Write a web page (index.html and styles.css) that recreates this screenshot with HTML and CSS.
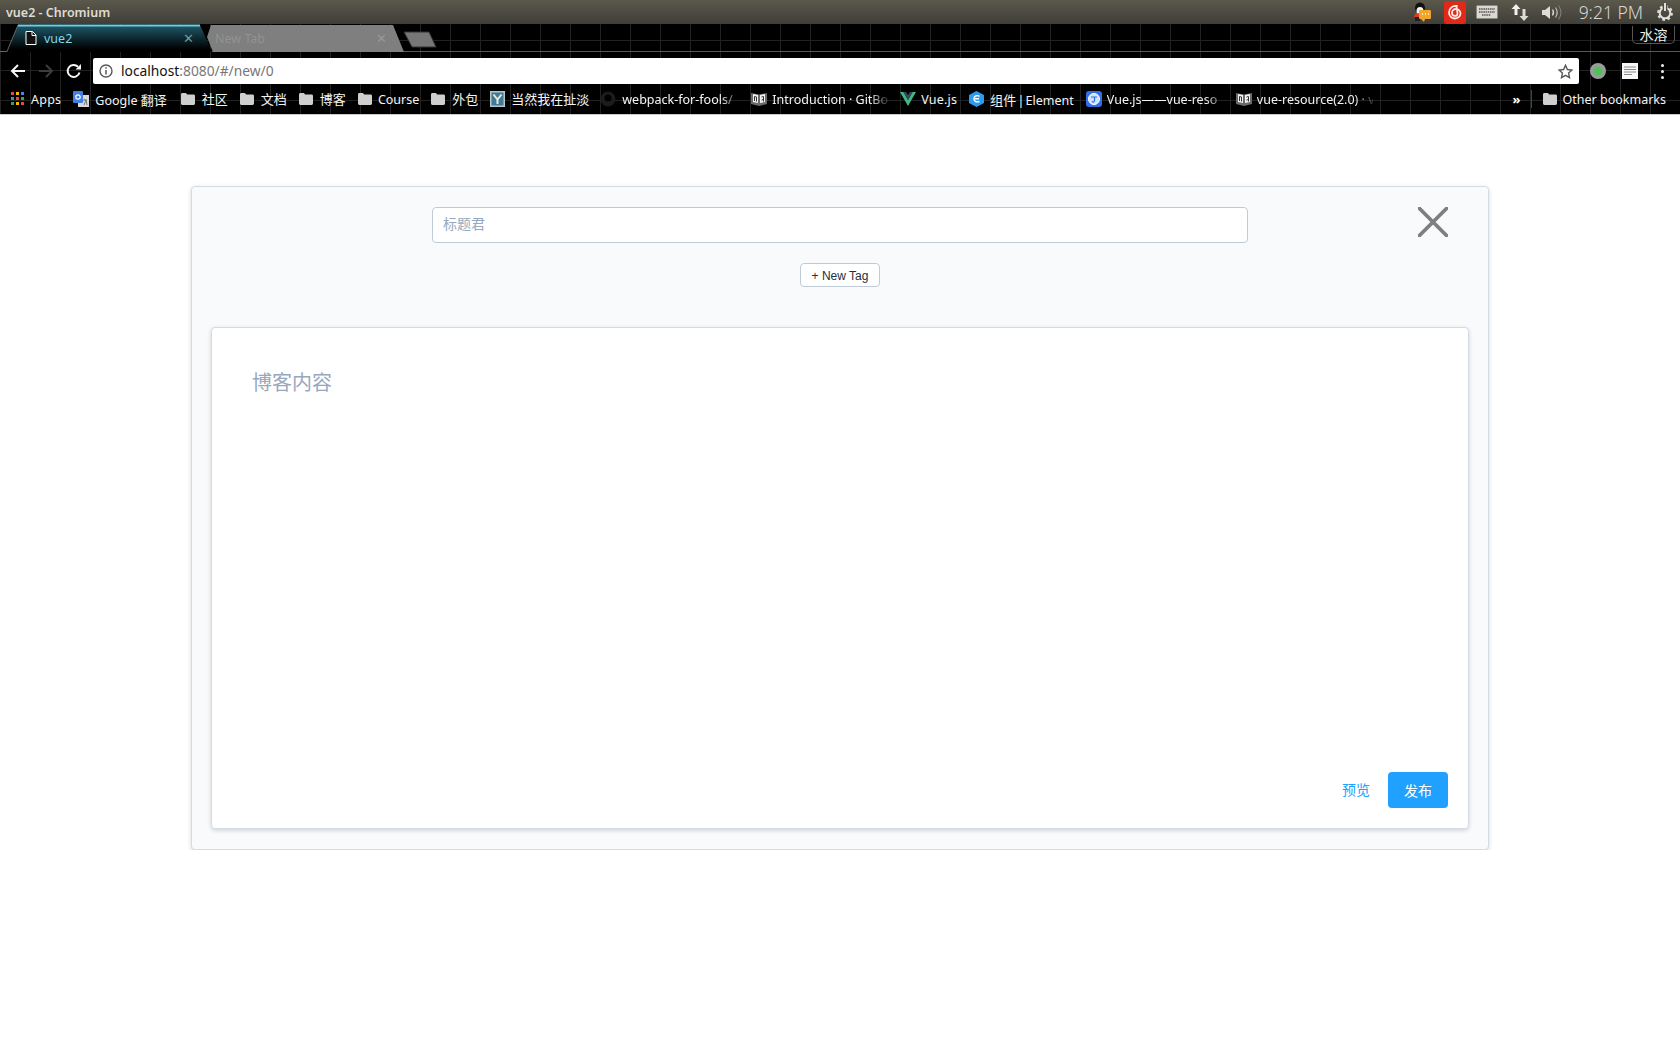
FILE: index.html
```html
<!DOCTYPE html>
<html>
<head>
	<meta charset="utf-8">
	<title>vue2 - Chromium</title>
	<link rel="stylesheet" href="styles.css">
</head>
<body>
	<svg class="defs" width="0" height="0">
		<symbol id="folder" viewBox="0 0 14 12">
			<path d="M0 1.500C0 .7.6 0 1.400 0h3.400l1.400 1.600h6.400c.8 0 1.400.6 1.400 1.400v7.600c0 .8-.6 1.400-1.400 1.400H1.400C.6 12 0 11.400 0 10.600z" fill="#cfcfcf"/>
		</symbol>
		<symbol id="book" viewBox="0 0 16 14">
			<path d="M0 1l8 1.500L16 1v11l-8 2-8-2z" fill="#6b6b6b"/>
			<path d="M2 2l5 1v8l-5-1zM9 3l5-1v8l-5 1z" fill="#f2f2f2"/>
			<path d="M3.500 9V4.500L5.500 5v4.500M10.500 5l2-.5v3l-2 .5M12.500 7v2.500" fill="none" stroke="#333" stroke-width="1"/>
		</symbol>
	</svg>

	<!-- ubuntu title bar -->
	<div class="titlebar">
		<span class="window-title">vue2 - Chromium</span>
		<div class="indicators">
			<svg class="ind-qq" width="18" height="20" viewBox="0 0 18 20">
				<ellipse cx="7" cy="6" rx="5" ry="5.500" fill="#111"/>
				<ellipse cx="7" cy="9" rx="3.500" ry="4" fill="#f4f4f4"/>
				<path d="M2 12c1-1 8-1 10 0l1 3H1z" fill="#e03a1c"/>
				<path d="M2 15h5v4H2z" fill="#222"/>
				<rect x="6" y="8" width="12" height="9" rx="1" fill="#f1a52b"/>
				<path d="M8 17l3 3 1-3z" fill="#f1a52b"/>
				<path d="M9 12h1M12 12h1M15 12h1" stroke="#fff" stroke-width="1.500"/>
			</svg>
			<svg class="ind-music" width="22" height="23" viewBox="0 0 22 23">
				<rect width="22" height="23" rx="3" fill="#e1291a"/>
				<path d="M13 5c-5-.5-8 2.500-8 6.500 0 3.500 2.800 6 6 6s5.500-2.500 5.500-5-2-4.500-4.500-4.500-4 1.800-4 3.700 1.300 3.200 3 3.200 2.500-1.200 2.500-2.500L12.500 6" fill="none" stroke="#fbe9e6" stroke-width="1.800" stroke-linecap="round"/>
			</svg>
			<svg class="ind-keys" width="22" height="14" viewBox="0 0 22 14">
				<rect x=".5" y=".5" width="21" height="13" rx="1" fill="#d8d8d4" stroke="#8c8b84"/>
				<path d="M3 4h16M3 7h16M6 10h9" stroke="#55544e" stroke-width="1.500" stroke-dasharray="1.500 .7"/>
			</svg>
			<svg class="ind-net" width="18" height="19" viewBox="0 0 18 19">
				<path d="M5 1L.5 6h3v6h3V6h3z" fill="#f0f0ec"/>
				<path d="M13 18l4.500-5h-3V6h-3v7h-3z" fill="#dcdcd8"/>
			</svg>
			<svg class="ind-vol" width="21" height="17" viewBox="0 0 21 17">
				<path d="M0 6h3l5-4v13l-5-4H0z" fill="#dddcd8"/>
				<path d="M10.500 5.500c1.200 1.800 1.200 4.200 0 6" fill="none" stroke="#dddcd8" stroke-width="1.300"/>
				<path d="M13.500 3.500c2 3 2 7 0 10" fill="none" stroke="#bdbcb6" stroke-width="1.200"/>
				<path d="M16.500 1.500c3 4.300 3 9.700 0 14" fill="none" stroke="#7d7c75" stroke-width="1.200"/>
			</svg>
			<span class="clock">9:21 PM</span>
			<svg class="ind-gear" width="18" height="18" viewBox="0 0 18 18">
				<circle cx="9" cy="10" r="6.600" fill="none" stroke="#dfdfdb" stroke-width="2.600" stroke-dasharray="2.600 2.580"/>
				<circle cx="9" cy="10" r="5.300" fill="none" stroke="#dfdfdb" stroke-width="2"/>
				<path d="M9 1v7" stroke="#4a4943" stroke-width="4.500"/>
				<path d="M9 0v8" stroke="#dfdfdb" stroke-width="2"/>
			</svg>
		</div>
	</div>

	<!-- browser chrome -->
	<div class="chrome">
		<div class="tabstrip">
			<div class="tab tab-active">
				<svg class="tab-shape" width="212" height="28" viewBox="0 0 212 28">
					<defs>
						<linearGradient id="tabfill" x1="0" y1="0" x2="0" y2="1">
							<stop offset="0" stop-color="#1f5a6b"/>
							<stop offset=".9" stop-color="#000"/>
						</linearGradient>
					</defs>
					<path d="M7 28L18 1h182l12 27z" fill="url(#tabfill)"/>
					<path d="M0 27.500h7L18 1" fill="none" stroke="#666"/>
					<path d="M18 1.500h182" stroke="#6fcfe0" stroke-width="2"/>
				</svg>
				<svg class="tab-doc" width="12" height="14" viewBox="0 0 12 14">
					<path d="M1 .500h6.500L11 4v9.500H1z" fill="#111" stroke="#fff"/>
					<path d="M7 .500V4.500h4" fill="none" stroke="#fff"/>
				</svg>
				<span class="tab-title">vue2</span>
				<span class="tab-close">✕</span>
			</div>
			<div class="tab tab-idle">
				<svg class="tab-shape" width="198" height="28" viewBox="0 0 198 28">
					<path d="M5 1L1 13l6 15h191L187 1z" fill="#7f7f7f"/>
				</svg>
				<span class="tab-title">New Tab</span>
				<span class="tab-close">✕</span>
			</div>
			<svg class="new-tab" width="34" height="17" viewBox="0 0 34 17">
				<path d="M1 1h25l7 15H9z" fill="#777" stroke="#333"/>
			</svg>
			<div class="profile">水溶</div>
		</div>

		<div class="toolbar">
			<svg class="nav-btn" width="16" height="16" viewBox="0 0 16 16">
				<path d="M15 8H2M8 2L2 8l6 6" fill="none" stroke="#f5f5f5" stroke-width="2"/>
			</svg>
			<svg class="nav-btn" width="16" height="16" viewBox="0 0 16 16">
				<path d="M1 8h13M8 2l6 6-6 6" fill="none" stroke="#3c3c3c" stroke-width="2"/>
			</svg>
			<svg class="nav-btn" width="16" height="16" viewBox="0 0 16 16">
				<path d="M13.500 9.500A6 6 0 1 1 12 3.800" fill="none" stroke="#f5f5f5" stroke-width="2"/>
				<path d="M9.500 6.500H15V1z" fill="#f5f5f5"/>
			</svg>
			<div class="omnibox">
				<svg class="info-icon" width="14" height="14" viewBox="0 0 14 14">
					<circle cx="7" cy="7" r="6" fill="none" stroke="#5a5a5a" stroke-width="1.400"/>
					<path d="M7 6v4.500M7 3.300v1.500" stroke="#5a5a5a" stroke-width="1.500"/>
				</svg>
				<span class="url"><span class="url-host">localhost</span>:8080/#/new/0</span>
				<svg class="star-icon" width="15" height="15" viewBox="0 0 15 15">
					<path d="M7.500 1.300l1.900 4.200 4.600.5-3.400 3.100.9 4.500-4-2.300-4 2.300.9-4.500L1 6l4.600-.5z" fill="none" stroke="#555" stroke-width="1.400"/>
				</svg>
			</div>
			<svg class="ext-dot" width="16" height="16" viewBox="0 0 16 16">
				<circle cx="8" cy="8" r="8" fill="#9b9b9b"/>
				<circle cx="8" cy="8" r="4.500" fill="#4dc15c"/>
			</svg>
			<svg class="ext-note" width="16" height="16" viewBox="0 0 16 16">
				<rect width="16" height="16" fill="#f7f7f7"/>
				<path d="M2 4h12M2 6.500h12M2 9h12M2 11.500h8" stroke="#8a8a8a"/>
			</svg>
			<div class="menu-dots"><i></i><i></i><i></i></div>
		</div>

		<div class="bookmarks">
			<a class="bm bm-folder">
				<svg width="13" height="13" viewBox="0 0 13 13">
					<path d="M0 0h3v3H0z" fill="#e8453c"/><path d="M5 0h3v3H5z" fill="#f5b400"/><path d="M10 0h3v3h-3z" fill="#3f85f4"/>
					<path d="M0 5h3v3H0z" fill="#3f85f4"/><path d="M5 5h3v3H5z" fill="#e8453c"/><path d="M10 5h3v3h-3z" fill="#2fa85a"/>
					<path d="M0 10h3v3H0z" fill="#2fa85a"/><path d="M5 10h3v3H5z" fill="#f5b400"/><path d="M10 10h3v3h-3z" fill="#e8453c"/>
				</svg>
				<span class="bm-apps">Apps</span>
			</a>
			<a class="bm bm-google">
				<svg width="16" height="16" viewBox="0 0 16 16">
					<rect x="5" y="4" width="11" height="12" fill="#d8d8d8"/>
					<rect width="10" height="12" rx="1" fill="#3f7fe8"/>
					<circle cx="5" cy="6" r="2.200" fill="none" stroke="#fff" stroke-width="1.200"/>
					<path d="M10 9h4M12 8v1M11 14l2-5 1 5" fill="none" stroke="#777"/>
				</svg>
				<span>Google <span class="cjk">翻译</span></span>
			</a>
			<a class="bm bm-folder"><svg width="14" height="12"><use href="#folder"/></svg><span class="cjk">社区</span></a>
			<a class="bm bm-folder"><svg width="14" height="12"><use href="#folder"/></svg><span class="cjk">文档</span></a>
			<a class="bm bm-folder"><svg width="14" height="12"><use href="#folder"/></svg><span class="cjk">博客</span></a>
			<a class="bm"><svg width="14" height="12"><use href="#folder"/></svg><span>Course</span></a>
			<a class="bm bm-folder"><svg width="14" height="12"><use href="#folder"/></svg><span class="cjk">外包</span></a>
			<a class="bm bm-y">
				<svg width="15" height="16" viewBox="0 0 15 16">
					<rect width="15" height="16" fill="#b9c6c4"/>
					<rect x="1.500" y="1.500" width="12" height="13" fill="#3d7a9c"/>
					<path d="M3.500 3.500l4 5 4-5M7.500 8v5" fill="none" stroke="#efe9d6" stroke-width="2"/>
				</svg>
				<span class="cjk">当然我在扯淡</span>
			</a>
			<a class="bm">
				<svg width="16" height="16" viewBox="0 0 16 16">
					<circle cx="8" cy="8" r="7.500" fill="#1c1c1c"/>
					<circle cx="8" cy="7" r="3.500" fill="#000"/>
				</svg>
				<span class="bm-cut bm-webpack">webpack-for-fools/</span>
			</a>
			<a class="bm bm-book"><svg width="16" height="14"><use href="#book"/></svg><span class="bm-cut bm-intro">Introduction · GitBo</span></a>
			<a class="bm bm-book">
				<svg width="16" height="14" viewBox="0 0 16 14">
					<path d="M0 0h3.500L8 8l4.500-8H16L8 14z" fill="#41b883"/>
					<path d="M3.500 0h2.700L8 3.200 9.800 0h2.700L8 8z" fill="#35495e"/>
				</svg>
				<span class="bm-vue">Vue.js</span>
			</a>
			<a class="bm">
				<svg width="15" height="16" viewBox="0 0 15 16">
					<path d="M7.500 0L15 4v8l-7.500 4L0 12V4z" fill="#2a9bf0"/>
					<path d="M10.500 5.500C9 4 5.500 4.500 5 7s1.500 4.500 5.500 3.500M6 7.800h4" fill="none" stroke="#fff" stroke-width="1.400"/>
				</svg>
				<span class="bm-element"><span class="cjk">组件</span> | Element</span>
			</a>
			<a class="bm bm-book">
				<svg width="16" height="16" viewBox="0 0 16 16">
					<rect width="16" height="16" rx="3" fill="#2f6fe8"/>
					<circle cx="8" cy="8" r="5.500" fill="#cfe0fb" stroke="#fff"/>
					<path d="M5 6h6M8.500 6v3.500c0 1.500-1.500 2-2.500 1" fill="none" stroke="#2f6fe8" stroke-width="1.200"/>
				</svg>
				<span class="bm-cut bm-vueres">Vue.js——vue-reso</span>
			</a>
			<a class="bm bm-book"><svg width="16" height="14"><use href="#book"/></svg><span class="bm-cut bm-res2">vue-resource(2.0) · v</span></a>
			<div class="bm-end">
				<span class="bm-more">»</span>
				<span class="bm-sep"></span>
				<a class="bm"><svg width="14" height="12"><use href="#folder"/></svg><span>Other bookmarks</span></a>
			</div>
		</div>
	</div>

	<!-- page -->
	<div class="page">
		<div class="panel">
			<div class="title-row">
				<div class="title-input">标题君</div>
				<svg class="close-icon" width="30" height="30" viewBox="0 0 30 30">
					<path d="M1.500 1.500l27 27M28.500 1.500l-27 27" stroke="#7f7f7f" stroke-width="3.800" stroke-linecap="round"/>
				</svg>
			</div>
			<div class="tag-row">
				<button class="tag-btn">+ New Tag</button>
			</div>
			<div class="editor">
				<div class="editor-text">博客内容</div>
				<div class="editor-actions">
					<button class="btn-text">预览</button>
					<button class="btn-primary">发布</button>
				</div>
			</div>
		</div>
	</div>
</body>
</html>
```

FILE: styles.css
```css
body {
	margin: 0;
	background: #fff;
	font-family: "Liberation Sans", "Noto Sans CJK SC", sans-serif;
	overflow: hidden;
}

.defs {
	display: block;
	height: 0;
}

/* title bar */
.titlebar {
	display: flex;
	justify-content: space-between;
	align-items: center;
	height: 24px;
	background: linear-gradient(#5b584c, #3f3e38);
	color: #dfdbd2;
}

.window-title {
	margin-left: 6px;
	font-family: "Noto Sans", "Noto Sans CJK SC", sans-serif;
	font-size: 12.5px;
	font-weight: 600;
}

.indicators {
	display: flex;
	align-items: center;
	height: 24px;
}

.ind-qq { margin-right: 13px; }
.ind-music { margin-right: 10px; }
.ind-keys { margin-right: 13px; }
.ind-net { margin-right: 13px; }
.ind-vol { margin-right: 16px; }
.ind-gear { margin: 0 6px 0 13px; }

.clock {
	font-family: "Noto Sans", sans-serif;
	font-size: 17.5px;
	font-weight: 300;
	color: #d6d6d2;
}

/* chrome */
.chrome {
	height: 91px;
	background-color: #000;
	background-image:
		linear-gradient(to right, #222 1px, transparent 1px),
		linear-gradient(to bottom, #222 1px, transparent 1px);
	background-size: 30px 30px;
	background-position: 0 -14px;
	color: #fff;
	font-family: "Noto Sans", "Noto Sans CJK SC", sans-serif;
	font-size: 12.5px;
}

.tabstrip {
	display: flex;
	align-items: flex-start;
	height: 28px;
	box-shadow: inset 0 -1px 0 #585858;
}

.tab {
	position: relative;
	display: flex;
	align-items: center;
	height: 28px;
	box-sizing: border-box;
}

.tab-shape {
	position: absolute;
	left: 0;
	top: 0;
}

.tab-active {
	width: 206px;
	padding-left: 25px;
}

.tab-idle {
	width: 197px;
	padding-left: 1px;
}

.tab-doc,
.tab-title,
.tab-close {
	position: relative;
}

.tab-title {
	margin-left: 8px;
	font-size: 12.5px;
	color: #7fd6e6;
}

.tab-active .tab-title {
	margin-left: 7px;
}

.tab-idle .tab-title {
	color: #929292;
}

.tab-close {
	margin-left: auto;
	font-size: 13px;
	color: #6f9aa0;
}

.tab-active .tab-close {
	margin-right: 12px;
}

.tab-idle .tab-close {
	margin-right: 16px;
	color: #979797;
}

.new-tab {
	margin-top: 7px;
}

.profile {
	margin: 2px 5px 0 auto;
	width: 43px;
	height: 18px;
	box-sizing: border-box;
	border: 1px solid #555;
	border-top: none;
	border-radius: 0 0 5px 5px;
	text-align: center;
	font-size: 14px;
	line-height: 18px;
	color: #f0f0f0;
}

.toolbar {
	display: flex;
	align-items: center;
	height: 32px;
	padding: 6px 0 0 10px;
	box-sizing: border-box;
}

.nav-btn {
	margin-right: 12px;
	flex: none;
}

.omnibox {
	display: flex;
	align-items: center;
	flex: none;
	width: 1486px;
	height: 26px;
	margin-left: -1px;
	border-radius: 2px;
	background: #fff;
	color: #777;
	font-size: 13.8px;
}

.info-icon {
	margin-left: 6px;
}

.url {
	margin-left: 8px;
	padding-bottom: 2px;
}

.url-host {
	color: #111;
}

.star-icon {
	margin: 0 6px 0 auto;
}

.ext-dot {
	margin-left: 11px;
	flex: none;
}

.ext-note {
	margin-left: 16px;
	flex: none;
}

.menu-dots {
	display: flex;
	flex-direction: column;
	gap: 3px;
	margin-left: 23px;
}

.menu-dots i {
	width: 3px;
	height: 3px;
	border-radius: 50%;
	background: #eee;
}

.bookmarks {
	display: flex;
	align-items: center;
	gap: 12px;
	height: 31px;
	padding: 0 14px 1px 11px;
	box-sizing: border-box;
	border-bottom: 1px solid #ccc;
}

.bm {
	display: flex;
	align-items: center;
	gap: 6px;
	white-space: nowrap;
	color: #f4f4f4;
}

/* the latin labels sit a pixel above the cjk ones otherwise */
.bm > span:not(.cjk) {
	padding-top: 2px;
}

.bm-folder { gap: 7px; }
.bm-book { gap: 5px; }
.bm-google { margin-right: 2px; }
.bm-y { margin-right: -1px; }
.bm-apps { letter-spacing: .25px; }
.bm-vue { letter-spacing: .2px; }
.bm-element { word-spacing: -2px; }

.cjk {
	font-size: 13px;
}

.bm-cut {
	display: block;
	-webkit-mask-image: linear-gradient(to right, #000 84%, rgba(0, 0, 0, .15));
	mask-image: linear-gradient(to right, #000 84%, rgba(0, 0, 0, .15));
}

.bm-webpack { width: 117px; }
.bm-intro { width: 116px; }
.bm-vueres { width: 117px; }
.bm-res2 { width: 116px; }

.bm-end {
	display: flex;
	align-items: center;
	margin-left: auto;
}

.bm-more {
	font-size: 13px;
	font-weight: 700;
}

.bm-sep {
	width: 1px;
	height: 18px;
	margin: 0 11px 0 10px;
	background: #444;
}

/* page */
.page {
	padding-top: 71px;
}

.panel {
	width: 1298px;
	margin: 0 auto;
	padding: 20px 19px;
	box-sizing: border-box;
	background: #f9fafc;
	border: 1px solid #d3dce6;
	border-radius: 4px;
	box-shadow: 0 2px 4px rgba(0, 0, 0, .12), 0 0 6px rgba(0, 0, 0, .04);
}

.title-row {
	display: grid;
	grid-template-columns: 1fr 816px 1fr;
	align-items: start;
}

.title-input {
	grid-column: 2;
	height: 36px;
	box-sizing: border-box;
	padding: 0 10px;
	background: #fff;
	border: 1px solid #bfcbd9;
	border-radius: 4px;
	font-size: 14px;
	line-height: 33px;
	color: #97a8be;
}

.close-icon {
	justify-self: end;
	margin-right: 21px;
}

.tag-row {
	display: flex;
	justify-content: center;
	margin: 20px 0 40px;
}

.tag-btn {
	width: 80px;
	height: 24px;
	padding: 1px 0 0;
	background: #fff;
	border: 1px solid #bfcbd9;
	border-radius: 4px;
	font-family: "Liberation Sans", sans-serif;
	font-size: 12px;
	color: #1f2d3d;
}

.editor {
	display: flex;
	flex-direction: column;
	height: 502px;
	box-sizing: border-box;
	padding: 40px 20px 20px 40px;
	background: #fff;
	border: 1px solid #d3dce6;
	border-radius: 4px;
	box-shadow: 0 2px 4px rgba(0, 0, 0, .12), 0 0 6px rgba(0, 0, 0, .04);
}

.editor-text {
	font-size: 20px;
	line-height: 31px;
	color: #97a8be;
}

.editor-actions {
	display: flex;
	justify-content: flex-end;
	align-items: center;
	gap: 18px;
	margin-top: auto;
}

.btn-text,
.btn-primary {
	padding: 0;
	border: none;
	border-radius: 4px;
	font-family: "Noto Sans CJK SC", sans-serif;
	font-size: 14px;
}

.btn-text {
	padding-bottom: 2px;
	background: none;
	color: #20a0ff;
}

.btn-primary {
	width: 60px;
	height: 36px;
	background: #20a0ff;
	color: #fff;
}
```
